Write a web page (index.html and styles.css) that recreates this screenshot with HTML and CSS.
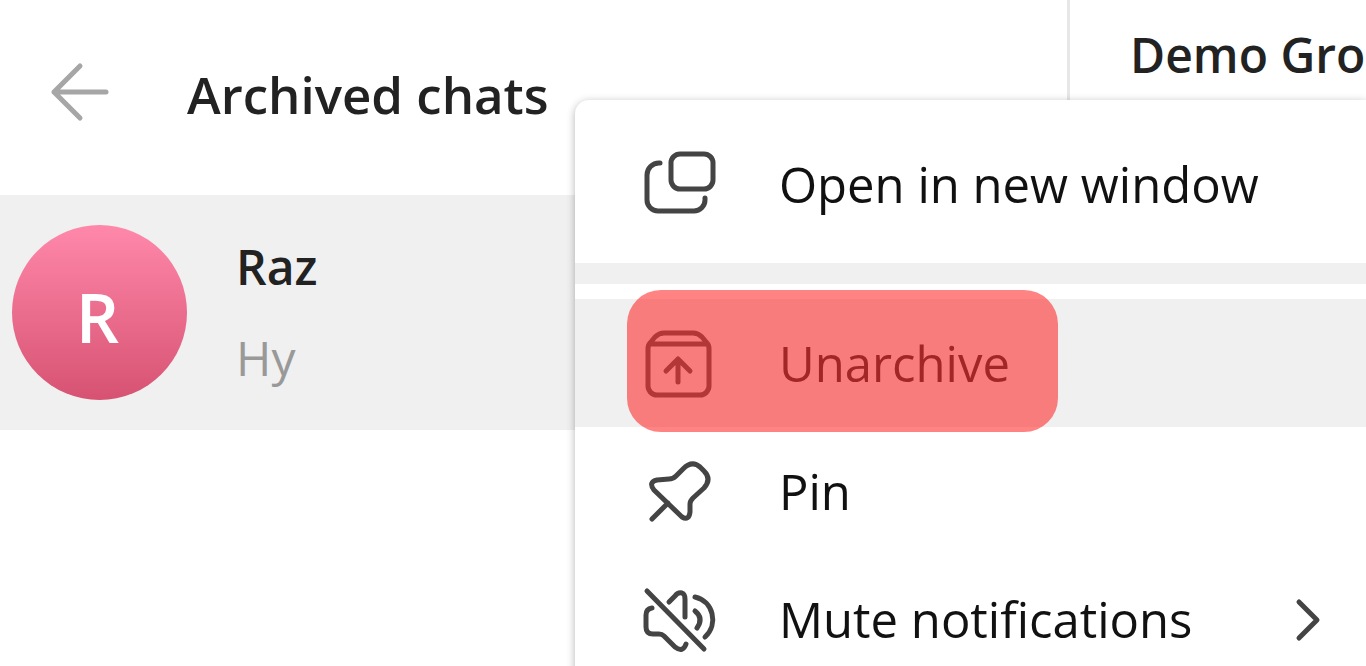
FILE: index.html
```html
<!DOCTYPE html>
<html lang="en">
<head>
    <meta charset="UTF-8">
    <meta name="viewport" content="width=device-width, initial-scale=1.0">
    <title>Archived chats</title>
    <link rel="stylesheet" href="styles.css">
</head>
<body>

    <div class="app">
        <!-- Chat list -->
        <div class="sidebar">
            <div class="sidebar-header">
                <button type="button" class="back-button" aria-label="Back">
                    <svg width="64" height="64" viewBox="0 0 64 64">
                        <path d="M58 30H6M32 4L6 30l26 26"/>
                    </svg>
                </button>
                <h1>Archived chats</h1>
            </div>

            <a href="#" class="chat">
                <span class="avatar">R</span>
                <span class="chat-info">
                    <span class="chat-name">Raz</span>
                    <span class="chat-message">Hy</span>
                </span>
            </a>
        </div>

        <!-- Open conversation -->
        <div class="conversation">
            <h2>Demo Group</h2>
        </div>
    </div>

    <!-- Context menu -->
    <div class="menu">
        <button type="button" class="menu-item">
            <svg class="icon" width="80" height="80" viewBox="0 0 80 80">
                <rect x="32" y="10" width="42" height="35" rx="9"/>
                <path d="M21 19h-1a12 12 0 0 0-12 12v25a11 11 0 0 0 11 11h36a11 11 0 0 0 11-11v-2"/>
            </svg>
            <span>Open in new window</span>
        </button>

        <hr>

        <button type="button" class="menu-item active">
            <svg class="icon" width="80" height="80" viewBox="0 0 80 80">
                <path d="M9 26v37a9 9 0 0 0 9 9h43a9 9 0 0 0 9-9V26q0-4-2-6l-5-6q-4-4-9-4H25q-5 0-9 4l-5 6q-2 2-2 6zM12 21h55M39 59V36M27 48l12-12 12 12"/>
            </svg>
            <span>Unarchive</span>
            <span class="highlight"></span>
        </button>

        <button type="button" class="menu-item">
            <svg class="icon" width="80" height="80" viewBox="0 0 80 80">
                <path d="M37 25L44 18q9-9 17-2l4 4q8 8 0 17L54 47q-3 3-3 6v8q-1 9-8 5L15 39q-6-8 3-10l12-1q4 0 7-3M29 52L13 68"/>
            </svg>
            <span>Pin</span>
        </button>

        <button type="button" class="menu-item">
            <svg class="icon" width="80" height="80" viewBox="0 0 80 80">
                <path d="M8 12l57 58M30 23l6-6q3-4 7-3 3 1 3 6v18M13 29q-6 1-6 7v12q0 7 7 7h6q3 0 5 2l11 11q8 6 11-3M56 18c18 4 24 27 10 40M56 32q9 7 2 17"/>
            </svg>
            <span>Mute notifications</span>
            <svg class="arrow" width="40" height="48" viewBox="0 0 40 48">
                <path d="M9 7l18 18L9 43"/>
            </svg>
        </button>
    </div>

</body>
</html>
```
FILE: styles.css
```css
* {
    box-sizing: border-box;
}

body {
    font-family: "Open Sans", "Noto Sans", sans-serif;
    font-size: 48px;
    line-height: 64px;
    margin: 0;
    background: #fff;
    color: #222;
    overflow: hidden;
}

.app {
    display: grid;
    grid-template-columns: 1fr 299px;
    min-height: 100vh;
}

h1, h2 {
    font-size: 51px;
    font-weight: 600;
    margin: 0;
    white-space: nowrap;
}

h2 {
    font-size: 48px;
}

button {
    font: inherit;
    color: inherit;
    border: none;
    background: none;
    cursor: pointer;
}

svg {
    fill: none;
    stroke: #444;
    stroke-width: 5px;
    stroke-linecap: round;
    stroke-linejoin: round;
    flex-shrink: 0;
}

/* Chat list */
.sidebar-header {
    display: flex;
    align-items: center;
    gap: 75px;
    height: 195px;
    padding: 0 48px 8px;
}

.back-button {
    display: flex;
    padding: 0;
}

.back-button svg {
    stroke: #a6a6a6;
}

.chat {
    display: flex;
    align-items: center;
    gap: 49px;
    height: 235px;
    padding: 0 12px;
    background: #f0f0f0;
    color: #222;
    text-decoration: none;
}

.avatar {
    display: flex;
    align-items: center;
    justify-content: center;
    width: 175px;
    height: 175px;
    padding: 8px 4px 0 0;
    border-radius: 50%;
    background: linear-gradient(#ff88aa, #d75272);
    color: #fff;
    font-size: 68px;
    font-weight: 600;
}

.chat-info {
    display: flex;
    flex-direction: column;
    gap: 27px;
}

.chat-name {
    font-weight: 600;
}

.chat-message {
    color: #999;
}

/* Open conversation */
.conversation {
    border-left: 3px solid #e7e7e7;
    padding: 23px 0 0 60px;
    overflow: hidden;
}

/* Context menu, lies over both panes */
.menu {
    position: absolute;
    top: 100px;
    left: 575px;
    right: 0;
    padding: 20px 0;
    border-top-left-radius: 14px;
    background: #fff;
    color: #111;
    font-size: 49px;
    box-shadow: 0 2px 8px rgba(0, 0, 0, 0.3);
}

.menu-item {
    position: relative;
    display: flex;
    align-items: center;
    width: 100%;
    height: 128px;
    padding: 0 36px 0 64px;
    text-align: left;
    white-space: nowrap;
}

.menu-item.active {
    background: #f0f0f0;
    color: #444;
}

.active .icon {
    stroke: #666;
}

.icon {
    margin-right: 60px;
}

.arrow {
    margin-left: auto;
}

hr {
    height: 21px;
    margin: 15px 0;
    border: none;
    background: #f0f0f0;
}

.highlight {
    position: absolute;
    top: -9px;
    bottom: -5px;
    left: 52px;
    width: 431px;
    border-radius: 34px;
    background: rgba(255, 8, 8, 0.5);
}
```
